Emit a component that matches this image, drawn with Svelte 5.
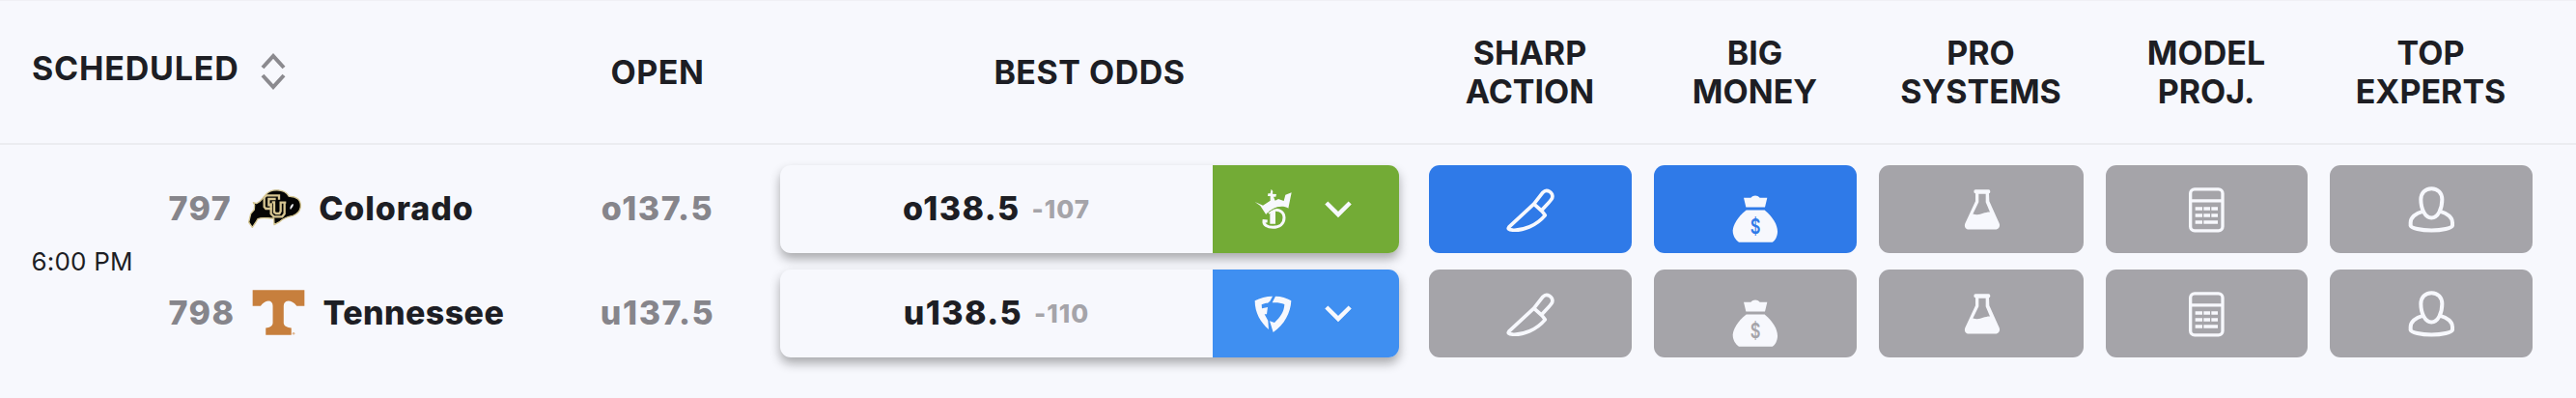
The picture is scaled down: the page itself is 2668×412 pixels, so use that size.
<!-- ------------------------------------------------------------
     COMPONENT: OddsTable
     PURPOSE:
       • One matchup: rotation numbers, open line, best odds
       • Signal buttons (sharp action, big money, ...)
------------------------------------------------------------- -->

<script>
  const signals = [
    { id: "sharp", label: ["SHARP", "ACTION"] },
    { id: "money", label: ["BIG", "MONEY"] },
    { id: "systems", label: ["PRO", "SYSTEMS"] },
    { id: "model", label: ["MODEL", "PROJ."] },
    { id: "experts", label: ["TOP", "EXPERTS"] }
  ];

  const game = {
    time: "6:00 PM",
    sides: [
      { rot: "797", team: "Colorado", logo: "cu", open: "o137.5", line: "o138.5", juice: "-107", book: "dk", active: ["sharp", "money"] },
      { rot: "798", team: "Tennessee", logo: "ut", open: "u137.5", line: "u138.5", juice: "-110", book: "fd", active: [] }
    ]
  };
</script>

{#snippet teamLogo(id)}
  {#if id === "cu"}
    <svg class="logo cu" viewBox="51 75 171 126">
      <path d="M70 119L80 122C94 116 99 106 107 97C121 75 167 74 181 100C205 99 219 112 217 133C214 150 204 156 193 160C180 163 166 165 153 178L135 188L134 168C118 169 98 163 84 170L78 180L67 196L56 180L62 154L73 141L74 126Z" fill="#050505" stroke="#d6c895" stroke-width="4" stroke-linejoin="round" />
      <g fill="none" stroke="#d6c591" stroke-width="7">
        <path d="M150 110V97H110L104 103V132L109 138H128" />
        <path d="M140 108H118V127H128" />
        <path d="M128 118H135V149L141 153H151L155 146V119H172M167 120V154L160 163H134L125 154V121" />
      </g>
      <path d="M184 139C184 130 189 124 194 123C196 132 190 133 187 140Z" fill="#f7f8fd" />
    </svg>
  {:else}
    <svg class="logo ut" viewBox="66 388 166 147">
      <path d="M68 391H230V441H206C197 429 188 425 179 425C169 426 165 432 165 441V495C167 505 176 509 189 510V532H109V510C122 509 130 504 131 494V441C131 431 126 425 117 425C107 426 99 432 93 441H68Z" fill="#c77f3d" />
      <circle cx="196" cy="527" r="4" fill="#e0b893" />
    </svg>
  {/if}
{/snippet}

{#snippet bookLogo(id)}
  <svg class="book-logo" viewBox={id === "dk" ? "147 105 120 132" : "147 427 120 132"} fill="#f7f8fd">
    {#if id === "dk"}
      <path d="M149 147L168 155L174 158L197 143L197 129L189 129L190 121L197 121L200 107L205 114L204 122L216 123L214 131L207 131L212 143L222 138L239 144L244 125L263 118L253 167C235 155 203 161 184 187L166 159Z" />
      <path d="M196 176L213 172V215H196Z" />
      <path d="M190 181C216 162 240 176 240 196C240 216 225 226 205 226C188 226 175 218 177 206L188 207" fill="none" stroke="#f7f8fd" stroke-width="9" />
      <path d="M184 187C203 164 232 160 252 169" fill="none" stroke="#73ab36" stroke-width="3" />
    {:else}
      <path d="M149 452C165 443 184 438 204 438L196 453L189 459C182 459 175 461 170 464L171 476L189 472L186 494L179 494L190 514L192 541C167 520 149 490 149 452Z" />
      <path d="M213 438C231 438 248 443 262 452C260 490 241 526 206 550L195 515L210 520C228 503 240 486 241 463C230 458 216 457 203 458Z" />
    {/if}
  </svg>
{/snippet}

{#snippet signalIcon(id)}
  {#if id === "sharp"}
    <svg class="icon" viewBox="-15 4.5 300 270" fill="none" stroke="#f7f8fd" stroke-width="11" stroke-linejoin="round">
      <path d="M146 122L69 193C64 199 68 202 80 203C113 205 154 189 181 157L171 144L146 122L174 86C186 73 207 86 203 103C200 111 188 122 169 143" />
    </svg>
  {:else if id === "money"}
    <svg class="icon" viewBox="-7 4.5 300 270" fill="#f7f8fd">
      <path d="M107 103H129C137 94 149 94 157 103H180L173 132H114Z" />
      <path d="M115 141H172C198 163 212 187 212 208C212 222 205 236 196 241H92C82 234 73 221 73 205C74 187 87 163 115 141Z" />
      <text class="dollar" x="127" y="213" textLength="32" lengthAdjust="spacingAndGlyphs">$</text>
    </svg>
  {:else if id === "systems"}
    <svg class="icon wide" viewBox="-9 4.5 330 270" fill="#f7f8fd">
      <path fill-rule="evenodd" d="M138 77H179Q184 77 184 83Q184 89 180 89L181 113L212 182C216 193 209 201 200 201H117C108 201 102 193 106 182L138 113V89Q133 89 133 83Q133 77 138 77ZM148 91V116L130 153C153 160 161 147 183 147L170 116V91Z" />
    </svg>
  {:else if id === "model"}
    <svg class="icon wide" viewBox="3 4.5 330 270" fill="#f7f8fd">
      <rect x="116" y="76" width="100" height="129" rx="13" fill="none" stroke="#f7f8fd" stroke-width="10" />
      <path d="M116 107H216V117H116ZM131 131H153V142H131ZM157 131H177V142H157ZM181 131H201V142H181ZM131 152H153V163H131ZM157 152H177V163H157ZM181 152H201V163H181ZM131 173H153V184H131ZM157 173H201V184H157Z" />
    </svg>
  {:else}
    <svg class="icon" viewBox="-6 4.5 300 270" fill="none" stroke="#f7f8fd" stroke-width="12">
      <path d="M145 74C165 74 178 88 178 108C178 137 165 165 145 165C125 165 112 137 112 108C112 88 125 74 145 74Z" />
      <path d="M118 145C94 151 80 165 80 180V189C82 197 112 204 145 204C178 204 208 197 210 189V180C210 165 196 151 172 145" />
    </svg>
  {/if}
{/snippet}

<div class="odds-table">
  <div class="row head">
    <div class="cell scheduled">
      <span>SCHEDULED</span>
      <svg class="sort" viewBox="0 0 26 38" fill="none" stroke="#8b8a8f" stroke-width="4">
        <path d="M2 15L13 3L24 15M2 23L13 35L24 23" />
      </svg>
    </div>
    <div class="cell"><span>OPEN</span></div>
    <div class="cell best-head"><span>BEST ODDS</span></div>
    {#each signals as s}
      <div class="cell two-line">
        <span>{s.label[0]}</span>
        <span>{s.label[1]}</span>
      </div>
    {/each}
    <div class="cell"></div>
  </div>

  <div class="row body">
    <div class="matchup">
      <div class="time">{game.time}</div>
      <div class="teams">
        {#each game.sides as side}
          <div class="team">
            <span class="rot">{side.rot}</span>
            {@render teamLogo(side.logo)}
            <span class="name {side.logo}-name">{side.team}</span>
          </div>
        {/each}
      </div>
    </div>

    <div class="stack">
      {#each game.sides as side}
        <div class="open">{side.open}</div>
      {/each}
    </div>

    <div class="stack best">
      {#each game.sides as side}
        <div class="odds">
          <div class="line">
            <span class="value">{side.line}</span>
            <span class="juice">{side.juice}</span>
          </div>
          <div class="book {side.book}">
            {@render bookLogo(side.book)}
            <svg class="chevron" viewBox="0 0 28 18" fill="none" stroke="#f7f8fd" stroke-width="4.5">
              <path d="M1.800 2L14 14L26.200 2" />
            </svg>
          </div>
        </div>
      {/each}
    </div>

    {#each signals as s}
      <div class="stack signals">
        {#each game.sides as side}
          <div class="signal" class:active={side.active.includes(s.id)}>
            {@render signalIcon(s.id)}
          </div>
        {/each}
      </div>
    {/each}
  </div>
</div>

<style>
  :global(body) {
    margin: 0;
    background: #f7f8fd;
  }

  .odds-table {
    box-sizing: border-box;
    width: 2668px;
    height: 412px;
    overflow: hidden;
    background: #f7f8fd;
    border-top: 1px solid #f0f0f5;
    font-family: Inter, "Liberation Sans", sans-serif;
    color: #1d1e24;
  }

  .row {
    display: grid;
    grid-template-columns: 575px 212px 681px 233px 233px 235px 232px 233px 1fr;
  }

  /* HEADER */
  .head {
    height: 147px;
    border-bottom: 2px solid #ebecf0;
    font-size: 34px;
    font-weight: 700;
    line-height: 40px;
    letter-spacing: 0.5px;
  }

  .cell {
    display: flex;
    align-items: center;
    justify-content: center;
    white-space: nowrap;
  }

  .scheduled {
    justify-content: flex-start;
    gap: 22px;
    padding: 0 0 7px 33px;
    letter-spacing: 0.8px;
  }

  .sort {
    width: 26px;
    height: 38px;
    margin-top: 6px;
  }

  .best-head {
    padding-left: 2px;
  }

  .two-line {
    flex-direction: column;
    letter-spacing: 0;
  }

  /* MATCHUP */
  .body {
    padding-top: 21px;
  }

  .matchup {
    display: flex;
    align-items: center;
  }

  .time {
    width: 142px;
    padding-left: 32.5px;
    font-size: 26px;
    letter-spacing: 0.2px;
    white-space: nowrap;
  }

  .teams,
  .stack {
    display: flex;
    flex-direction: column;
    gap: 17px;
  }

  .team,
  .open,
  .line {
    box-sizing: border-box;
    display: flex;
    align-items: center;
    height: 91px;
    padding-bottom: 2px;
    font-size: 34px;
    font-weight: 800;
  }

  .rot {
    color: #86858b;
    letter-spacing: 1.4px;
  }

  .cu {
    width: 57px;
    height: 42px;
    margin: 0 17px 0 16px;
  }

  .ut {
    width: 55px;
    height: 49px;
    margin: 0 18px 0 18px;
  }

  .cu-name {
    letter-spacing: 0.9px;
  }

  .ut-name {
    letter-spacing: 0.4px;
  }

  .open {
    justify-content: center;
    letter-spacing: 1.6px;
    color: #86858b;
  }

  /* BEST ODDS */
  .best {
    padding: 0 19px 0 21px;
  }

  .odds {
    display: flex;
    height: 91px;
    border-radius: 11px;
    background: #f7f8fd;
    box-shadow: 0 6px 11px rgba(0, 0, 0, 0.32);
    overflow: hidden;
  }

  .line {
    flex: 1;
    justify-content: center;
    gap: 12px;
  }

  .value {
    letter-spacing: 1.4px;
  }

  .juice {
    padding-top: 2px;
    font-size: 26px;
    letter-spacing: 1px;
    color: #a5a4a9;
  }

  .book {
    display: flex;
    align-items: center;
    gap: 33px;
    width: 150px;
    padding-left: 43px;
  }

  .dk {
    background: #73ab36;
  }

  .fd {
    background: #3f8ff1;
  }

  .book-logo {
    width: 40px;
    height: 44px;
  }

  .chevron {
    width: 28px;
    height: 18px;
  }

  /* SIGNALS */
  .signals {
    padding: 0 11px 0 12px;
  }

  .signal {
    --tile: #a5a4a9;
    display: flex;
    align-items: center;
    justify-content: center;
    height: 91px;
    border-radius: 11px;
    background: var(--tile);
  }

  .active {
    --tile: #2f7ae8;
  }

  .icon {
    width: 100px;
    height: 90px;
  }

  .wide {
    width: 110px;
  }

  .dollar {
    font-family: Inter, "Liberation Sans", sans-serif;
    font-size: 64px;
    font-weight: 600;
    fill: var(--tile);
  }
</style>
